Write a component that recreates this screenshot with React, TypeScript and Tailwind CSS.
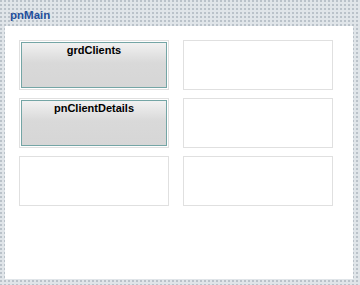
const cells: (string | null)[] = ["grdClients", null, "pnClientDetails", null, null, null];

function DesignButton({ label }: { label: string }) {
  return (
    <div className="h-full w-full border border-[#e0e0e0] bg-white p-px">
      <div className="flex h-full w-full justify-center border border-[#74a5a5] bg-[linear-gradient(#f1f1f1,#d9d9d9_45%,#d6d6d6)] pt-px">
        <span className="text-[11px] font-bold leading-[13px] text-black">{label}</span>
      </div>
    </div>
  );
}

export default function App() {
  return (
    <div
      className="flex h-[285px] w-[360px] flex-col bg-[#e0e5e9] bg-[radial-gradient(circle,#acb6bf_0.6px,transparent_1px)] bg-[length:4px_4px] bg-[position:-1px_-1px] pb-[6px] pl-[5px] pr-[7px]"
      style={{ fontFamily: '"Liberation Sans", Arial, sans-serif' }}
    >
      {/* Caption bar */}
      <div className="h-[26px] shrink-0 pl-[5px] pt-[9px] text-[11.5px] font-bold leading-[13px] text-[#1f4f9c]">
        pnMain
      </div>

      {/* Client area */}
      <div className="flex-1 bg-white pl-[14px] pt-[14px]">
        <div className="grid grid-cols-[150px_150px] grid-rows-[50px_50px_50px] gap-x-[14px] gap-y-[8px]">
          {cells.map((label, i) =>
            label ? (
              <DesignButton key={i} label={label} />
            ) : (
              <div key={i} className="border border-[#e0e0e0] bg-white" />
            )
          )}
        </div>
      </div>
    </div>
  );
}
